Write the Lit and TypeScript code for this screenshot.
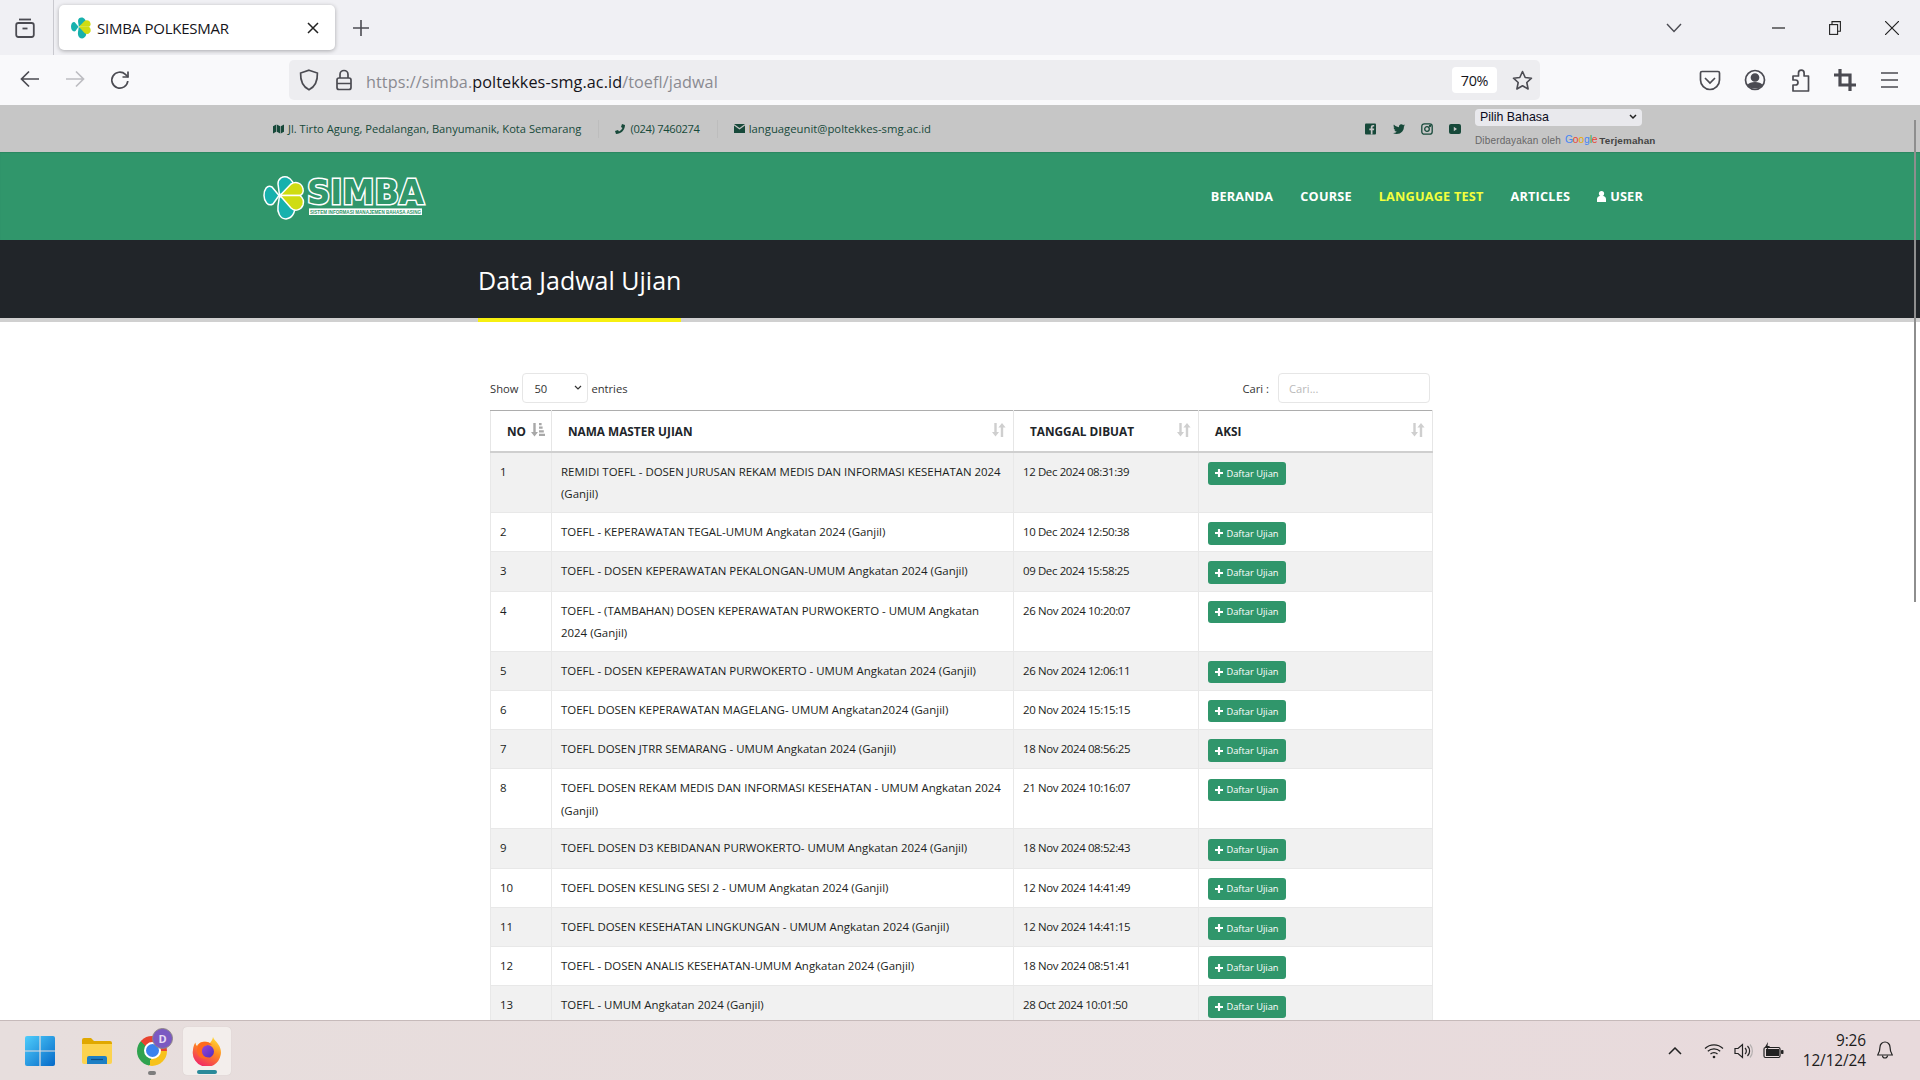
import { LitElement, html, css, svg } from "lit";
import { customElement } from "lit/decorators.js";

const ROWS: [string, string][] = [
  ["REMIDI TOEFL - DOSEN JURUSAN REKAM MEDIS DAN INFORMASI KESEHATAN 2024 (Ganjil)", "12 Dec 2024 08:31:39"],
  ["TOEFL - KEPERAWATAN TEGAL-UMUM Angkatan 2024 (Ganjil)", "10 Dec 2024 12:50:38"],
  ["TOEFL - DOSEN KEPERAWATAN PEKALONGAN-UMUM Angkatan 2024 (Ganjil)", "09 Dec 2024 15:58:25"],
  ["TOEFL - (TAMBAHAN) DOSEN KEPERAWATAN PURWOKERTO - UMUM Angkatan 2024 (Ganjil)", "26 Nov 2024 10:20:07"],
  ["TOEFL - DOSEN KEPERAWATAN PURWOKERTO - UMUM Angkatan 2024 (Ganjil)", "26 Nov 2024 12:06:11"],
  ["TOEFL DOSEN KEPERAWATAN MAGELANG- UMUM Angkatan2024 (Ganjil)", "20 Nov 2024 15:15:15"],
  ["TOEFL DOSEN JTRR SEMARANG - UMUM Angkatan 2024 (Ganjil)", "18 Nov 2024 08:56:25"],
  ["TOEFL DOSEN REKAM MEDIS DAN INFORMASI KESEHATAN - UMUM Angkatan 2024 (Ganjil)", "21 Nov 2024 10:16:07"],
  ["TOEFL DOSEN D3 KEBIDANAN PURWOKERTO- UMUM Angkatan 2024 (Ganjil)", "18 Nov 2024 08:52:43"],
  ["TOEFL DOSEN KESLING SESI 2 - UMUM Angkatan 2024 (Ganjil)", "12 Nov 2024 14:41:49"],
  ["TOEFL DOSEN KESEHATAN LINGKUNGAN - UMUM Angkatan 2024 (Ganjil)", "12 Nov 2024 14:41:15"],
  ["TOEFL - DOSEN ANALIS KESEHATAN-UMUM Angkatan 2024 (Ganjil)", "18 Nov 2024 08:51:41"],
  ["TOEFL - UMUM Angkatan 2024 (Ganjil)", "28 Oct 2024 10:01:50"],
];

const petals = (stroke: string, sw: number) => svg`
  <g stroke=${stroke} stroke-width=${sw} stroke-linejoin="round">
    <path fill="#17b1ad" d="M29 33.5 L22 25 C17 22 14 28 14 33.5 C14 39 18 45 23 42 Z"/>
    <path fill="#17b1ad" d="M29.5 33 L28 22 C28 16 33 14 37 15 C42 17 45 22 43 27 Z"/>
    <path fill="#17b1ad" d="M29.5 34 L43 42 C47 48 43 56 36 57 C30 57 27 50 28 44 Z"/>
    <path fill="#cfdc12" d="M30 33.5 L41 22 C46 19 52 21 53 27 C54 30 52 33 50 33.5 Z"/>
    <path fill="#cfdc12" d="M30 33.5 L50 33.5 C53 36 54 40 53 43 C51 48 45 50 41 46 Z"/>
  </g>`;

const sortIcon = svg`<svg class="sort" width="14" height="14" viewBox="0 0 14 14" fill="currentColor"><path d="M2.300 0h2.400v9H7l-3.500 4.500L0 9h2.300zM10 0l3.600 4.500h-2.400V14H8.800V4.500H6.400z"/></svg>`;
const sortAsc = svg`<svg class="sort dark" width="14" height="14" viewBox="0 0 14 14" fill="currentColor"><path d="M2.300 0h2.400v9H7l-3.500 4.500L0 9h2.300zM8 0h2.600v2.200H8zM8 3.600h3.600v2.200H8zM8 7.200h4.800v2.200H8zM8 10.800h6V13H8z"/></svg>`;

@customElement("app-root")
export class AppRoot extends LitElement {
  static styles = css`
    :host { display: flex; flex-direction: column; width: 1920px; height: 1080px; overflow: hidden; font-family: "Open Sans", sans-serif; color: #212529; background: #fff; }
    svg { display: block; flex: none; }

    .strip { height: 55px; background: #f0f0f4; display: flex; align-items: center; flex: none; }
    .strip-left { height: 55px; border-right: 1px solid #c9c9cf; display: flex; align-items: center; padding-left: 14px; box-sizing: content-box; width: 39px; }
    .tab { width: 276px; height: 45px; margin-left: 5px; background: #fff; border-radius: 5px; box-shadow: 0 1px 4px rgba(0,0,0,.3); display: flex; align-items: center; padding-left: 11px; box-sizing: border-box; }
    .tab-title { font-size: 15px; letter-spacing: -.25px; color: #15141a; margin-left: 5px; flex: 1; white-space: nowrap; }
    .tab-x { margin-right: 15px; }
    .plus { margin-left: 18px; }
    .strip-right { margin-left: auto; display: flex; align-items: center; }
    .chev { margin-right: 90px; }
    .win-btn { margin-right: 44px; }
    .win-btn.last { margin-right: 21px; }

    .navbar { height: 50px; background: #f9f9fb; display: flex; align-items: center; flex: none; }
    .nav-left { display: flex; gap: 25px; padding-left: 20px; width: 289px; box-sizing: border-box; }
    .url { width: 1251px; height: 40px; background: #ededf0; border-radius: 5px; display: flex; align-items: center; padding-left: 10px; box-sizing: border-box; }
    .lock { margin-left: 16px; }
    .url-text { margin-left: 13px; padding-top: 3px; font-size: 16.2px; letter-spacing: .08px; color: #8a8a90; flex: 1; white-space: nowrap; }
    .url-text b { font-weight: 400; color: #15141a; }
    .zoom { width: 45px; height: 26px; margin-right: 3px; background: #fff; border-radius: 4px; font-size: 14.4px; letter-spacing: -.3px; display: flex; align-items: center; justify-content: center; color: #15141a; }
    .star { margin: 0 7px 0 12px; }
    .nav-right { display: flex; margin-left: 158px; gap: 21px; align-items: center; }
    .pocket { margin-top: 2px; }
    .burger { margin-left: 1px; }

    .viewport { flex: 1; position: relative; overflow: hidden; background: #fff; }
    .scrollbar { position: absolute; right: 4px; top: 15px; width: 2px; height: 482px; background: #8e8e8e; }

    .topbar { height: 47px; background: #c6c6c6; display: flex; align-items: center; padding: 0 278px 0 273px; color: #17493a; font-size: 11.15px; }
    .info { display: flex; align-items: center; gap: 4px; white-space: nowrap; }
    .phone { letter-spacing: -.3px; gap: 5px; margin-left: -1px; }
    .mail { font-size: 11.3px; margin-left: -1px; }
    .sep { width: 1px; height: 18px; background: #bdbdbd; margin: 0 17px; }
    .socials { margin-left: auto; display: flex; gap: 16px; margin-right: 14px; color: #17493a; }
    .lang { width: 167px; align-self: flex-start; margin-top: 3.500px; }
    .lang-sel { height: 17.500px; width: 167px; background: #e9e9ed; border-radius: 4px; display: flex; align-items: center; justify-content: space-between; padding: 0 5px; box-sizing: border-box; font-family: "Liberation Sans", sans-serif; font-size: 12.4px; color: #0b0b20; }
    .powered { font-family: "Liberation Sans", sans-serif; margin-top: 8px; font-size: 10px; letter-spacing: .15px; color: #666; white-space: nowrap; display: flex; gap: 3px; align-items: center; height: 12px; }
    .powered b { color: #444; font-weight: 700; font-size: 9.9px; margin-left: -1px; }
    .glogo { font-size: 10.4px; font-weight: 400; letter-spacing: -.2px; margin-left: 1px; position: relative; top: -1px; }
    .g1 { color: #4285f4; } .g2 { color: #ea4335; } .g3 { color: #e8ab00; } .g4 { color: #34a853; }

    .greenbar { height: 88px; background: #30966b; display: flex; align-items: center; padding-left: 250px; padding-right: 277px; box-shadow: inset 0 1px 1px rgba(0,0,0,.1); }
    .logo { position: relative; top: 1px; }
    .menu { margin-left: auto; display: flex; gap: 27px; align-items: center; color: #fff; font-weight: 700; font-size: 12.7px; letter-spacing: .2px; white-space: nowrap; }
    .menu .on { color: #f4ff3c; }
    .user { display: flex; align-items: center; gap: 4px; }

    .titlebar { height: 78px; background: #212529; border-bottom: 4px solid #d0d0d0; padding-left: 478px; }
    .title { display: inline-flex; align-items: center; box-sizing: border-box; height: 82px; padding-top: 1px; border-bottom: 4px solid #f7f011; color: #fff; font-size: 25px; white-space: nowrap; }

    .main { margin-left: 490px; width: 942px; padding-top: 51px; }
    .controls { display: flex; align-items: center; height: 30px; margin-bottom: 7px; font-size: 11.2px; color: #333; }
    .sel { width: 66px; height: 30px; margin: 0 3px 0 4px; border: 1px solid #e6e6e6; border-radius: 4px; box-sizing: border-box; display: flex; align-items: center; justify-content: space-between; padding: 0 5px 0 11px; }
    .cari { margin-left: auto; margin-right: 9px; }
    .search { width: 152px; height: 30px; margin-right: 2px; border: 1px solid #e6e6e6; border-radius: 4px; box-sizing: border-box; padding: 0 10px; font: inherit; outline: none; }
    .search::placeholder { color: #b9b9b9; }

    table { border-collapse: collapse; table-layout: fixed; width: 942px; font-size: 11.45px; border: 1.5px solid #adadad; border-bottom: none; }
    col.c1 { width: 61px; } col.c2 { width: 462px; } col.c3 { width: 185px; } col.c4 { width: 234px; }
    th { height: 40px; padding: 0; border: 1px solid #e6e6e6; border-bottom: 2px solid #cfcfcf; border-top: 1.5px solid #adadad; font-weight: 700; font-size: 11.8px; text-align: left; color: #212529; }
    .th { display: flex; align-items: center; justify-content: space-between; padding: 0 7px 0 16px; }
    .th.first { padding-right: 6px; }
    .sort { color: #cfcfcf; margin-top: -3px; }
    .sort.dark { color: #a8a8a8; }
    td { padding: 8px 9px 6.200px; line-height: 22.400px; vertical-align: top; border: 1px solid #e8e8e8; color: #1b1e21; }
    td.num { letter-spacing: -.37px; }
    tr:nth-child(odd) td { background: #f1f1f1; }
    .btn { display: flex; width: 78px; height: 22.500px; margin-top: 1.200px; margin-bottom: .4px; background: #30966b; border-radius: 3px; color: #fff; font-size: 9.3px; align-items: center; justify-content: center; gap: 3px; line-height: 1; white-space: nowrap; }

    .taskbar { height: 60px; flex: none; box-sizing: border-box; border-top: 1px solid #c6baba; background: linear-gradient(90deg,#e7dedd,#e8dadc); display: flex; align-items: center; padding-left: 16px; }
    .slot { width: 48px; height: 48px; margin-right: 8px; display: flex; align-items: center; justify-content: center; position: relative; border-radius: 4px; }
    .slot.fx { background: #f3eeec; margin-left: -1px; box-shadow: 0 0 1px rgba(0,0,0,.15); }
    .slot.ex { margin-left: 1px; margin-right: 7px; }
    .ring { width: 30px; height: 30px; border-radius: 50%; background: conic-gradient(from 310deg,#e8432f 0 140deg,#f7c21b 140deg 240deg,#2fa24e 240deg 360deg); display: flex; align-items: center; justify-content: center; }
    .hole { border-radius: 50%; background: #3b82ee; border: 2px solid #fff; box-sizing: content-box; width: 13px; height: 13px; }
    .badge { position: absolute; left: 24px; top: 1px; width: 21px; height: 21px; border-radius: 50%; background: #7a59c2; border: 1px solid #8e8585; box-sizing: border-box; color: #e6dcf5; font-size: 11px; font-weight: 700; display: flex; align-items: center; justify-content: center; }
    .dot { position: absolute; left: 20px; bottom: 0; width: 8px; height: 4px; border-radius: 2px; background: #7d7d7d; }
    .bar { position: absolute; left: 14px; bottom: 1px; width: 20px; height: 4px; border-radius: 2px; background: #2a8a9a; }

    .tray { margin-left: auto; display: flex; align-items: center; padding-right: 27px; }
    .tray .i1 { margin-right: 22px; }
    .tray .i2 { margin-right: 10px; }
    .tray .i3 { margin-right: 9.500px; }
    .clock { margin-left: 6px; width: 76px; text-align: right; font-size: 15.4px; line-height: 20px; color: #1c1c1c; letter-spacing: -.1px; white-space: nowrap; }
    .bell { margin-left: 11px; }
  `;

  private logo() {
    return svg`<svg class="logo" width="200" height="70" viewBox="0 0 200 70">
      ${petals("#fff", 1.5)}
      <text x="57" y="42" font-family="DejaVu Sans" font-weight="700" font-size="33" fill="#30966b" stroke="#fff" stroke-width="3" textLength="117" lengthAdjust="spacingAndGlyphs" paint-order="stroke">SIMBA</text>
      <rect x="59" y="46.400" width="113" height="6.600" fill="#fff"/>
      <text x="60" y="52" font-family="Liberation Sans" font-weight="700" font-size="5.600" fill="#30966b" textLength="111" lengthAdjust="spacingAndGlyphs">SISTEM INFORMASI MANAJEMEN BAHASA ASING</text>
    </svg>`;
  }

  private strip() {
    return html`<div class="strip">
      <div class="strip-left">
        <svg width="22" height="22" viewBox="0 0 22 22" fill="none" stroke="#4b4b52" stroke-width="1.800"><path d="M5 2.500h12"/><rect x="2.200" y="6" width="17.600" height="14" rx="2.200"/><path d="M8.500 11.500h5"/></svg>
      </div>
      <div class="tab">
        <svg width="22" height="24" viewBox="12 12 44 48">${petals("none", 0)}</svg>
        <span class="tab-title">SIMBA POLKESMAR</span>
        <svg class="tab-x" width="14" height="14" viewBox="0 0 14 14" stroke="#222" stroke-width="1.500"><path d="M2 2l10 10M12 2L2 12"/></svg>
      </div>
      <svg class="plus" width="16" height="16" viewBox="0 0 16 16" stroke="#4b4b52" stroke-width="1.600"><path d="M8 0v16M0 8h16"/></svg>
      <div class="strip-right">
        <svg class="chev" width="16" height="10" viewBox="0 0 16 10" fill="none" stroke="#4b4b52" stroke-width="1.400"><path d="M1 1l7 7.500L15 1"/></svg>
        <svg class="win-btn" width="13" height="2" viewBox="0 0 13 2" stroke="#222" stroke-width="1.200"><path d="M0 1h13"/></svg>
        <svg class="win-btn" width="12" height="14" viewBox="0 0 12 14" fill="none" stroke="#222" stroke-width="1.100"><rect x="0.600" y="3.600" width="8" height="9.800"/><path d="M3 3.500V.6h8.400v9.600H8.600"/></svg>
        <svg class="win-btn last" width="14" height="14" viewBox="0 0 14 14" stroke="#222" stroke-width="1.200"><path d="M0 0l14 14M14 0L0 14"/></svg>
      </div>
    </div>`;
  }

  private navbar() {
    return html`<div class="navbar">
      <div class="nav-left">
        <svg width="20" height="18" viewBox="0 0 20 18" fill="none" stroke="#4b4b52" stroke-width="1.700"><path d="M19 9H2M9 1.500L1.500 9 9 16.500"/></svg>
        <svg width="20" height="18" viewBox="0 0 20 18" fill="none" stroke="#bdbdc2" stroke-width="1.700"><path d="M1 9h17M11 1.500L18.500 9 11 16.500"/></svg>
        <svg width="20" height="20" viewBox="0 0 20 20" fill="none" stroke="#4b4b52" stroke-width="1.700"><path d="M17.800 11a8 8 0 1 1-2.400-6.600L18 7"/><path d="M18 1.500V7h-5.500"/></svg>
      </div>
      <div class="url">
        <svg width="20" height="22" viewBox="0 0 20 22" fill="none" stroke="#4b4b52" stroke-width="1.700"><path d="M10 1.200 18.400 4c.3 8-2 13.600-8.400 16.800C3.600 17.600 1.300 12 1.600 4z"/></svg>
        <svg class="lock" width="18" height="22" viewBox="0 0 18 22" fill="none" stroke="#4b4b52" stroke-width="1.700"><rect x="2" y="9" width="14" height="11.500" rx="2"/><path d="M5 9V5.500a4 4 0 0 1 8 0V9M2 14.500h14"/></svg>
        <div class="url-text">https://simba.<b>poltekkes-smg.ac.id</b>/toefl/jadwal</div>
        <div class="zoom">70%</div>
        <svg class="star" width="21" height="21" viewBox="0 0 21 21" fill="none" stroke="#4b4b52" stroke-width="1.600" stroke-linejoin="round"><path d="M10.500 1.500l2.700 6 6.300.7-4.700 4.300 1.300 6.500-5.600-3.300-5.600 3.300 1.300-6.500L1.500 8.200l6.300-.7z"/></svg>
      </div>
      <div class="nav-right">
        <svg class="pocket" width="24" height="22" viewBox="0 0 24 22" fill="none" stroke="#4b4b52" stroke-width="1.700"><path d="M4 1.500h16c1 0 1.500.7 1.500 1.500v7a9.500 9.500 0 0 1-19 0V3c0-.8.500-1.500 1.500-1.500z"/><path d="M7 8l5 5 5-5"/></svg>
        <svg width="24" height="24" viewBox="0 0 24 24" fill="none" stroke="#4b4b52" stroke-width="1.700"><circle cx="12" cy="12" r="9.500"/><circle cx="12" cy="9.500" r="3.500" fill="#4b4b52"/><path d="M5.500 17c2-3 11-3 13 0-2 3.400-11 3.400-13 0z" fill="#4b4b52"/></svg>
        <svg width="24" height="24" viewBox="0 0 24 24" fill="none" stroke="#4b4b52" stroke-width="1.700" stroke-linejoin="round"><path d="M5 23v-6h2.500a2.500 2.500 0 0 0 0-5H5V8h5.500V5a2.800 2.800 0 0 1 5.600 0v3h4.400v15z"/></svg>
        <svg width="24" height="24" viewBox="0 0 24 24" fill="none" stroke="#4b4b52" stroke-width="3.200"><path d="M7 1v16h16"/><path d="M1 7h16v16"/></svg>
        <svg class="burger" width="21" height="24" viewBox="0 0 21 24" stroke="#4b4b52" stroke-width="1.700"><path d="M2 5h17M2 12h17M2 19h17"/></svg>
      </div>
    </div>`;
  }

  private topbar() {
    return html`<div class="topbar">
      <div class="info">
        <svg width="11" height="10" viewBox="0 0 12 10" fill="currentColor"><path d="M0 2l3.500-2v8L0 10zM4.200 0l3.600 2v8L4.200 8zM8.500 2L12 0v8l-3.500 2z"/></svg>
        Jl. Tirto Agung, Pedalangan, Banyumanik, Kota Semarang
      </div>
      <div class="sep"></div>
      <div class="info phone">
        <svg width="10" height="10" viewBox="0 0 10 10" fill="currentColor"><path d="M7 0l3 1c0 5-4 9-9 9L0 7l3-1 1 1.500C5.500 6.800 6.800 5.500 7.500 4L6 3z"/></svg>
        (024) 7460274
      </div>
      <div class="sep"></div>
      <div class="info mail">
        <svg width="11" height="9" viewBox="0 0 11 9" fill="currentColor"><path d="M0 0h11L5.500 4zM0 1.500l5.500 4 5.500-4V9H0z"/></svg>
        languageunit@poltekkes-smg.ac.id
      </div>
      <div class="socials">
        <svg width="12" height="12" viewBox="0 0 12 12"><rect width="11" height="11" y=".5" fill="currentColor" rx="1"/><path d="M7.500 11.500V7.200H9l.2-1.700H7.500V4.400c0-.5.200-.8.800-.8h.9V2.100H8c-1.300 0-2.200.8-2.200 2.200v1.200H4.300v1.700h1.500v4.300z" fill="#c6c6c6"/></svg>
        <svg width="12" height="12" viewBox="0 0 12 12" fill="currentColor"><path d="M12 2.300c-.4.200-.9.300-1.400.4.500-.3.900-.8 1.100-1.400-.5.300-1 .5-1.600.6a2.500 2.500 0 0 0-4.200 2.300C3.900 4.100 2 3.100.9 1.600c-.7 1.100-.3 2.600.8 3.300-.4 0-.8-.1-1.100-.3 0 1.200.8 2.200 2 2.500-.4.100-.7.100-1.100 0 .3 1 1.200 1.700 2.300 1.700C2.700 9.700 1.400 10.100 0 10c3 1.900 7 1.100 9.300-1.500 1.200-1.400 1.700-3 1.600-4.900.4-.3.800-.8 1.100-1.300z"/></svg>
        <svg width="12" height="12" viewBox="0 0 12 12" fill="none" stroke="currentColor" stroke-width="1.300"><rect x=".8" y=".8" width="10.400" height="10.400" rx="2.500"/><circle cx="6" cy="6" r="2.300"/><circle cx="9" cy="3" r=".5"/></svg>
        <svg width="12" height="12" viewBox="0 0 12 12"><rect y="1" width="12" height="10" rx="2" fill="currentColor"/><path d="M4.800 3.800L8 6 4.800 8.200z" fill="#c6c6c6"/></svg>
      </div>
      <div class="lang">
        <div class="lang-sel"><span>Pilih Bahasa</span>
          <svg width="8" height="6" viewBox="0 0 8 6" fill="none" stroke="#222" stroke-width="1.500"><path d="M1 1l3 3 3-3"/></svg>
        </div>
        <div class="powered">Diberdayakan oleh
          <span class="glogo"><span class="g1">G</span><span class="g2">o</span><span class="g3">o</span><span class="g1">g</span><span class="g4">l</span><span class="g2">e</span></span>
          <b>Terjemahan</b></div>
      </div>
    </div>`;
  }

  private table() {
    return html`<table>
      <colgroup><col class="c1"/><col class="c2"/><col class="c3"/><col class="c4"/></colgroup>
      <thead><tr>
        <th><div class="th first"><span>NO</span>${sortAsc}</div></th>
        <th><div class="th"><span>NAMA MASTER UJIAN</span>${sortIcon}</div></th>
        <th><div class="th"><span>TANGGAL DIBUAT</span>${sortIcon}</div></th>
        <th><div class="th"><span>AKSI</span>${sortIcon}</div></th>
      </tr></thead>
      <tbody>
        ${ROWS.map((r, i) => html`<tr>
          <td>${i + 1}</td><td>${r[0]}</td><td class="num">${r[1]}</td>
          <td><div class="btn">
            <svg width="8" height="8" viewBox="0 0 9 9" fill="#fff"><path d="M3.300 0h2.400v3.300H9v2.400H5.700V9H3.300V5.700H0V3.300h3.300z"/></svg>
            Daftar Ujian</div></td>
        </tr>`)}
      </tbody>
    </table>`;
  }

  private taskbar() {
    return html`<div class="taskbar">
      <div class="slot">
        <svg width="30" height="30" viewBox="0 0 30 30">
          <defs><linearGradient id="w" x1="0" y1="0" x2="1" y2="1"><stop offset="0" stop-color="#4fcdfb"/><stop offset="1" stop-color="#0569c8"/></linearGradient></defs>
          <rect width="30" height="30" rx="2" fill="url(#w)"/><path d="M15 0v30M0 15h30" stroke="#e7dedd" stroke-width="1.200"/>
        </svg>
      </div>
      <div class="slot ex">
        <svg width="30" height="26" viewBox="0 0 30 26">
          <path d="M0 2a2 2 0 0 1 2-2h7l3 3h16a2 2 0 0 1 2 2v5H0z" fill="#e0a800"/>
          <path d="M0 6h30v18a2 2 0 0 1-2 2H2a2 2 0 0 1-2-2z" fill="#fcd34f"/>
          <path d="M5 26v-6a2 2 0 0 1 2-2h16a2 2 0 0 1 2 2v6z" fill="#1d7fc4"/>
          <path d="M9 21.500h12" stroke="#0f4f86" stroke-width="1.200"/>
        </svg>
      </div>
      <div class="slot">
        <div class="ring"><div class="hole"></div></div>
        <div class="badge">D</div>
        <div class="dot"></div>
      </div>
      <div class="slot fx">
        <svg width="30" height="30" viewBox="0 0 30 30">
          <defs>
            <linearGradient id="f1" x1=".8" y1="0" x2=".3" y2="1"><stop offset="0" stop-color="#ffe23a"/><stop offset=".45" stop-color="#ff8a1f"/><stop offset="1" stop-color="#f0246a"/></linearGradient>
            <linearGradient id="f2" x1="0" y1="0" x2="1" y2="1"><stop offset="0" stop-color="#9a47d8"/><stop offset="1" stop-color="#4f2dc0"/></linearGradient>
          </defs>
          <path d="M21 1c1 3 3 4 5 7 3 4 3.500 8 2.500 11.500A14 14 0 0 1 1 14c.2-3 1-5.500 2.500-7.500 0 1.500.5 2.500 1.500 3.500 1-2 3-3.500 5-4 3-.7 6-.3 8 1 1.500-2 3-4 3-6.500z" fill="url(#f1)"/>
          <circle cx="15.500" cy="15.500" r="6.500" fill="url(#f2)"/>
          <path d="M8 7c4-2 9-1.500 12 2-3-.8-7 0-9 2.500-1.500 2-1.500 5.500.5 8 1.500 1.500 4 2.300 6.500 1.700-3 2.300-8 2-11-1C4 17 4.500 10.500 8 7z" fill="#ff6a1f"/>
        </svg>
        <div class="bar"></div>
      </div>
      <div class="tray">
        <svg class="i1" width="14" height="8" viewBox="0 0 14 8" fill="none" stroke="#222" stroke-width="1.500"><path d="M1 7l6-6 6 6"/></svg>
        <svg class="i2" width="20" height="16" viewBox="0 0 20 16" fill="none" stroke="#222" stroke-width="1.200"><path d="M1 5.500a13 13 0 0 1 18 0M3.800 8.300a9 9 0 0 1 12.400 0M6.500 11a5 5 0 0 1 7 0"/><circle cx="10" cy="14" r="1.300" fill="#222" stroke="none"/></svg>
        <svg class="i3" width="20" height="16" viewBox="0 0 20 16" fill="none" stroke="#222" stroke-width="1.200"><path d="M1 5.500h3L8.500 1.500v13L4 10.500H1z"/><path d="M11 5a4 4 0 0 1 0 6M13.500 3a7 7 0 0 1 0 10"/><path d="M16 1.500a10 10 0 0 1 0 13" stroke="#b5b0b0"/></svg>
        <svg width="21" height="18" viewBox="0 0 21 18" fill="#222"><path d="M5 0L2 5h2.500L3 9l4-5H4.500z"/><rect x="1" y="5.500" width="16" height="10" rx="1.500" fill="none" stroke="#222" stroke-width="1.200"/><rect x="3" y="7" width="13" height="7"/><rect x="18" y="8" width="2.500" height="4" rx=".8"/></svg>
        <div class="clock">9:26<br/>12/12/24</div>
        <svg class="bell" width="16" height="19" viewBox="0 0 16 19" fill="none" stroke="#222" stroke-width="1.200"><path d="M8 1a5 5 0 0 1 5 5c0 4 1 6 2.300 8H.7C2 12 3 10 3 6a5 5 0 0 1 5-5z"/><path d="M5.500 14.500a2.500 2.500 0 0 0 5 0"/></svg>
      </div>
    </div>`;
  }

  render() {
    return html`
      ${this.strip()}
      ${this.navbar()}
      <div class="viewport">
        ${this.topbar()}
        <div class="greenbar">
          ${this.logo()}
          <div class="menu">
            <span>BERANDA</span><span>COURSE</span><span class="on">LANGUAGE TEST</span><span>ARTICLES</span>
            <span class="user"><svg width="9" height="11" viewBox="0 0 9 11" fill="#fff"><circle cx="4.500" cy="2.600" r="2.600"/><path d="M0 11V8c0-2 1.500-3.300 4.500-3.300S9 6 9 8v3z"/></svg>USER</span>
          </div>
        </div>
        <div class="titlebar"><div class="title">Data Jadwal Ujian</div></div>
        <div class="main">
          <div class="controls">
            <span>Show</span>
            <div class="sel"><span>50</span><svg width="8" height="6" viewBox="0 0 8 6" fill="none" stroke="#333" stroke-width="1.200"><path d="M1 1l3 3 3-3"/></svg></div>
            <span>entries</span>
            <span class="cari">Cari :</span>
            <input class="search" placeholder="Cari..." />
          </div>
          ${this.table()}
        </div>
        <div class="scrollbar"></div>
      </div>
      ${this.taskbar()}
    `;
  }
}
